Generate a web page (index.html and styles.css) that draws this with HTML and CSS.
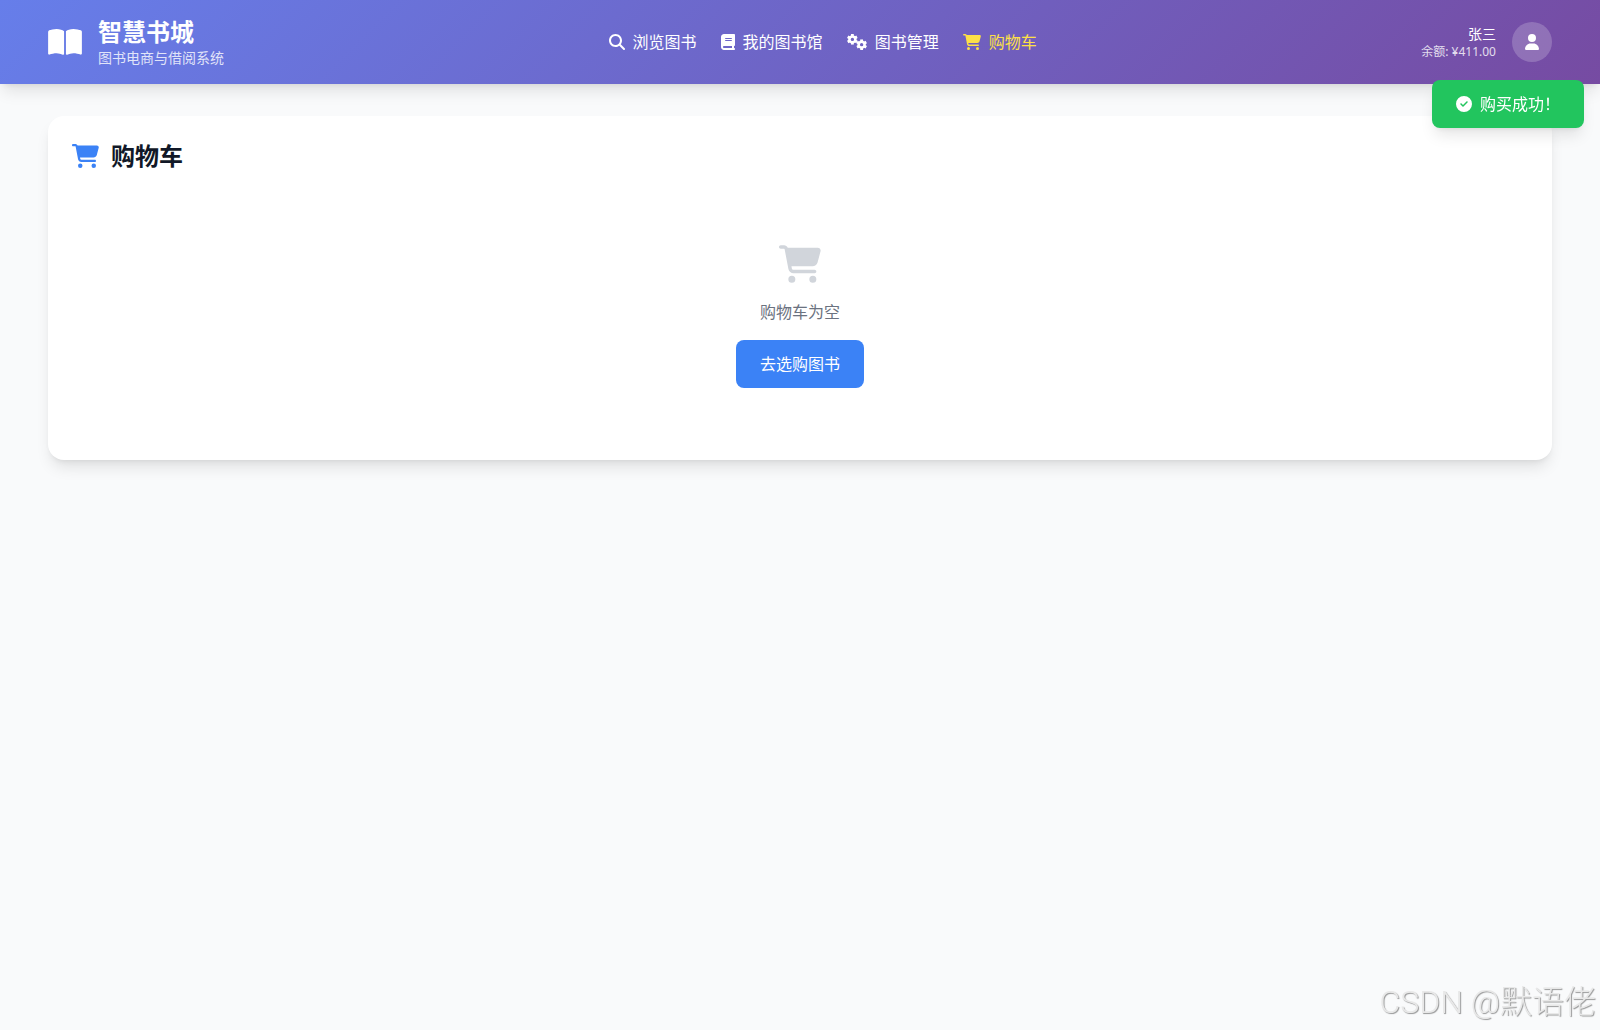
FILE: index.html
```html
<!DOCTYPE html>
<html lang="zh-CN">
<head>
    <meta charset="UTF-8">
    <meta name="viewport" content="width=device-width, initial-scale=1.0">
    <title>智慧书城 - 购物车</title>
    <link rel="stylesheet" href="styles.css">
</head>
<body>
    <!-- 图标定义 -->
    <svg class="icon-defs" aria-hidden="true">
        <symbol id="icon-book-open" viewBox="0 0 576 512">
            <path d="M249.6 471.5c10.8 3.8 22.4-4.1 22.4-15.5V78.6c0-4.2-1.6-8.4-5-11C247.4 52 202.4 32 144 32C93.5 32 46.3 45.3 18.1 56.1C6.8 60.5 0 71.7 0 83.8V454.1c0 11.9 12.8 20.2 24.1 16.5C55.6 460.1 105.5 448 144 448c33.9 0 79 14 105.6 23.5zm76.8 0C353 462 398.1 448 432 448c38.5 0 88.4 12.1 119.9 22.6c11.3 3.8 24.1-4.6 24.1-16.5V83.8c0-12.1-6.8-23.3-18.1-27.6C529.7 45.3 482.5 32 432 32c-58.4 0-103.4 20-123 35.6c-3.3 2.6-5 6.8-5 11V456c0 11.4 11.7 19.3 22.4 15.5z"/>
        </symbol>
        <symbol id="icon-search" viewBox="0 0 512 512">
            <path d="M416 208c0 45.9-14.9 88.3-40 122.7L502.6 457.4c12.5 12.5 12.5 32.8 0 45.3s-32.8 12.5-45.3 0L330.7 376c-34.4 25.2-76.8 40-122.7 40C93.1 416 0 322.9 0 208S93.1 0 208 0S416 93.1 416 208zM208 352a144 144 0 1 0 0-288 144 144 0 1 0 0 288z"/>
        </symbol>
        <symbol id="icon-book" viewBox="0 0 448 512">
            <path d="M96 0C43 0 0 43 0 96V416c0 53 43 96 96 96H384h32c17.7 0 32-14.3 32-32s-14.3-32-32-32V384c17.7 0 32-14.3 32-32V32c0-17.7-14.3-32-32-32H384 96zm0 384H352v64H96c-17.7 0-32-14.3-32-32s14.3-32 32-32zm32-240c0-8.8 7.2-16 16-16H336c8.8 0 16 7.2 16 16s-7.2 16-16 16H144c-8.8 0-16-7.2-16-16zm16 48H336c8.8 0 16 7.2 16 16s-7.2 16-16 16H144c-8.8 0-16-7.2-16-16s7.2-16 16-16z"/>
        </symbol>
        <symbol id="icon-gear" viewBox="-160 -160 320 320">
            <g fill="none" stroke="currentColor">
                <circle r="88" stroke-width="76"/>
                <g stroke-width="84">
                    <path d="M0-100V-160M0 100V160"/>
                    <path d="M0-100V-160M0 100V160" transform="rotate(60)"/>
                    <path d="M0-100V-160M0 100V160" transform="rotate(120)"/>
                </g>
            </g>
        </symbol>
        <symbol id="icon-cogs" viewBox="0 0 640 512">
            <use href="#icon-gear" x="0" y="0" width="344" height="344"/>
            <use href="#icon-gear" x="296" y="168" width="344" height="344"/>
        </symbol>
        <symbol id="icon-cart" viewBox="0 0 576 512">
            <path d="M0 24C0 10.7 10.7 0 24 0H69.5c22 0 41.5 12.8 50.6 32h411c26.3 0 45.5 25 38.6 50.4l-41 152.3c-8.5 31.4-37 53.3-69.5 53.3H170.7l5.4 28.5c2.2 11.3 12.1 19.5 23.6 19.5H488c13.3 0 24 10.7 24 24s-10.7 24-24 24H199.7c-34.6 0-64.3-24.6-70.7-58.5L77.4 54.5c-.7-3.8-4-6.5-7.9-6.5H24C10.7 48 0 37.3 0 24zM128 464a48 48 0 1 1 96 0 48 48 0 1 1 -96 0zm336-48a48 48 0 1 1 0 96 48 48 0 1 1 0-96z"/>
        </symbol>
        <symbol id="icon-user" viewBox="0 0 448 512">
            <path d="M224 256A128 128 0 1 0 224 0a128 128 0 1 0 0 256zm-45.7 48C79.8 304 0 383.8 0 482.3C0 498.7 13.3 512 29.7 512H418.3c16.4 0 29.7-13.3 29.7-29.7C448 383.8 368.2 304 269.7 304H178.3z"/>
        </symbol>
        <symbol id="icon-check" viewBox="0 0 512 512">
            <path d="M256 512A256 256 0 1 0 256 0a256 256 0 1 0 0 512zM369 209L241 337c-9.4 9.4-24.6 9.4-33.9 0l-64-64c-9.4-9.4-9.4-24.6 0-33.9s24.6-9.4 33.9 0l47 47L335 175c9.4-9.4 24.6-9.4 33.9 0s9.4 24.6 0 33.9z"/>
        </symbol>
    </svg>

    <!-- 顶部导航 -->
    <header class="header">
        <div class="container header-inner">
            <div class="brand">
                <svg class="brand-icon" aria-hidden="true"><use href="#icon-book-open"/></svg>
                <div>
                    <h1>智慧书城</h1>
                    <p>图书电商与借阅系统</p>
                </div>
            </div>
            <nav class="nav">
                <a href="#browse"><svg class="icon" aria-hidden="true"><use href="#icon-search"/></svg>浏览图书</a>
                <a href="#library"><svg class="icon icon-narrow" aria-hidden="true"><use href="#icon-book"/></svg>我的图书馆</a>
                <a href="#manage"><svg class="icon icon-wide" aria-hidden="true"><use href="#icon-cogs"/></svg>图书管理</a>
                <a href="#cart" class="active"><svg class="icon icon-cart" aria-hidden="true"><use href="#icon-cart"/></svg>购物车</a>
            </nav>
            <div class="user">
                <div class="user-info">
                    <p class="user-name">张三</p>
                    <p class="user-balance">余额: ¥411.00</p>
                </div>
                <div class="avatar">
                    <svg class="icon icon-narrow" aria-hidden="true"><use href="#icon-user"/></svg>
                </div>
            </div>
        </div>
    </header>

    <!-- 购物车 -->
    <main class="container main">
        <section class="card" id="cart">
            <h2><svg class="title-icon" aria-hidden="true"><use href="#icon-cart"/></svg>购物车</h2>
            <div class="empty">
                <svg class="empty-icon" aria-hidden="true"><use href="#icon-cart"/></svg>
                <p>购物车为空</p>
                <button type="button" class="btn">去选购图书</button>
            </div>
        </section>
    </main>

    <!-- 提示消息 -->
    <div class="toast" role="status">
        <svg class="icon" aria-hidden="true"><use href="#icon-check"/></svg>购买成功！
    </div>

    <div class="watermark">CSDN @默语佬</div>
</body>
</html>
```
FILE: styles.css
```css
* {
    box-sizing: border-box;
}
body {
    margin: 0;
    min-height: 100vh;
    background-color: #f9fafb;
    color: #111827;
    font-family: "Noto Sans", "Noto Sans CJK SC", sans-serif;
    font-size: 16px;
    line-height: 24px;
}
h1, h2, p {
    margin: 0;
}
h1, h2 {
    font-size: 24px;
    line-height: 32px;
    font-weight: 700;
}
svg {
    fill: currentColor;
    flex-shrink: 0;
}
.icon-defs {
    position: absolute;
    width: 0;
    height: 0;
}
.icon {
    width: 16px;
    height: 16px;
}
.icon-narrow {
    width: 14px;
}
.icon-wide {
    width: 20px;
}
.icon-cart {
    width: 18px;
}
.container {
    max-width: 1536px;
    margin: 0 auto;
    padding: 16px;
}
.header {
    background: linear-gradient(135deg, #667eea 0%, #764ba2 100%);
    color: white;
    box-shadow: 0 10px 15px -3px rgba(0,0,0,0.1), 0 4px 6px -4px rgba(0,0,0,0.1);
}
.header-inner {
    display: flex;
    align-items: center;
    justify-content: space-between;
}
.brand {
    display: flex;
    align-items: center;
    gap: 16px;
}
.brand-icon {
    width: 34px;
    height: 30px;
}
.brand p {
    font-size: 14px;
    line-height: 20px;
    opacity: 0.8;
}
.nav {
    display: flex;
    gap: 24px;
}
.nav a {
    display: flex;
    align-items: center;
    gap: 8px;
    color: white;
    text-decoration: none;
}
.nav a:hover, .nav a.active {
    color: #fde047;
}
.user {
    display: flex;
    align-items: center;
    gap: 16px;
}
.user-info {
    text-align: right;
}
.user-name {
    font-size: 14px;
    line-height: 20px;
}
.user-balance {
    font-size: 12px;
    line-height: 16px;
    opacity: 0.8;
}
.avatar {
    display: flex;
    align-items: center;
    justify-content: center;
    width: 40px;
    height: 40px;
    border-radius: 50%;
    background-color: rgba(255,255,255,0.2);
}
.main {
    padding-top: 32px;
    padding-bottom: 32px;
}
.card {
    padding: 24px;
    border-radius: 16px;
    background-color: white;
    box-shadow: 0 10px 15px -3px rgba(0,0,0,0.1), 0 4px 6px -4px rgba(0,0,0,0.1);
}
.card h2 {
    display: flex;
    align-items: center;
    gap: 12px;
    margin-bottom: 24px;
}
.title-icon {
    width: 27px;
    height: 24px;
    color: #3b82f6;
}
.empty {
    display: flex;
    flex-direction: column;
    align-items: center;
    gap: 16px;
    padding: 48px 0;
    color: #6b7280;
}
.empty-icon {
    width: 42px;
    height: 40px;
    color: #d1d5db;
}
.btn {
    padding: 12px 24px;
    border: none;
    border-radius: 8px;
    background-color: #3b82f6;
    color: white;
    font: inherit;
    cursor: pointer;
    transition: background-color 0.3s ease;
}
.btn:hover {
    background-color: #2563eb;
}
.toast {
    position: fixed;
    top: 80px;
    right: 16px;
    display: flex;
    align-items: center;
    gap: 8px;
    padding: 12px 24px;
    border-radius: 8px;
    background-color: #22c55e;
    color: white;
    box-shadow: 0 10px 15px -3px rgba(0,0,0,0.1), 0 4px 6px -4px rgba(0,0,0,0.1);
}
.watermark {
    position: fixed;
    right: 4px;
    bottom: 8px;
    color: #e8e8e8;
    font-family: Roboto, "Noto Sans CJK SC", sans-serif;
    font-size: 32px;
    font-weight: 300;
    line-height: 40px;
    text-shadow: 1px 1px 1px rgba(0,0,0,0.4);
    pointer-events: none;
}
```
